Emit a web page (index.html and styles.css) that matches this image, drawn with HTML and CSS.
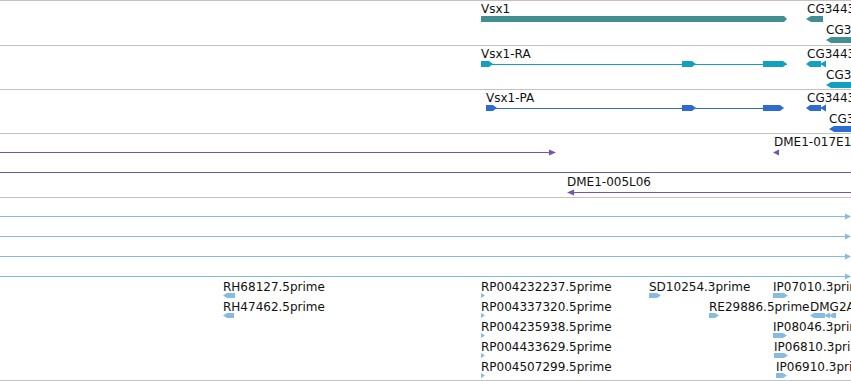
FILE: index.html
```html
<!DOCTYPE html>
<html>
<head>
<meta charset="utf-8">
<title>Tracks</title>
<link rel="stylesheet" href="styles.css">
</head>
<body>
<div class="view">
  <div class="track t-gene">
    <svg class="glyphs" width="851" height="45" viewBox="0 0 851 45">
      <polygon points="481,16 784,16 787,19 784,22 481,22"/>
      <polygon points="806,19 811,16 823,16 823,22 811,22"/>
      <polygon points="826,40 831,37 851,37 851,43 831,43"/>
    </svg>
    <span class="lbl" style="left:481px;top:1px">Vsx1</span>
    <span class="lbl" style="left:807px;top:1px">CG34434</span>
    <span class="lbl" style="left:826px;top:22px">CG34436</span>
  </div>

  <div class="track t-ra">
    <svg class="glyphs" width="851" height="44" viewBox="0 0 851 44">
      <rect x="481" y="19" width="306" height="1"/>
      <polygon points="481,16 489,16 493,19 489,22 481,22"/>
      <polygon points="682,16 692,16 696,19 692,22 682,22"/>
      <polygon points="763,16 783,16 787,19 783,22 763,22"/>
      <polygon points="806,19 810,16 821,16 821,22 810,22"/>
      <polygon points="820,19 826,15.5 826,22.5"/>
      <polygon points="826,40 831,37 851,37 851,43 831,43"/>
    </svg>
    <span class="lbl" style="left:481px;top:1px">Vsx1-RA</span>
    <span class="lbl" style="left:807px;top:1px">CG34434-RA</span>
    <span class="lbl" style="left:826px;top:22px">CG34436-RA</span>
  </div>

  <div class="track t-pa">
    <svg class="glyphs" width="851" height="44" viewBox="0 0 851 44">
      <rect x="486" y="19" width="297" height="1"/>
      <polygon points="486,16 493,16 497,19 493,22 486,22"/>
      <polygon points="682,16 692,16 696,19 692,22 682,22"/>
      <polygon points="763,16 780,16 784,19 780,22 763,22"/>
      <polygon points="806,19 810,16 821,16 821,22 810,22"/>
      <polygon points="820,19 826,15.5 826,22.5"/>
      <polygon points="829,40 834,37 851,37 851,43 834,43"/>
    </svg>
    <span class="lbl" style="left:486px;top:1px">Vsx1-PA</span>
    <span class="lbl" style="left:807px;top:1px">CG34434-PA</span>
    <span class="lbl" style="left:829px;top:22px">CG34436-PA</span>
  </div>

  <div class="track t-clone">
    <svg class="glyphs" width="851" height="64" viewBox="0 0 851 64">
      <rect x="0" y="19" width="551" height="1"/>
      <polygon points="549,16.5 556,19.5 549,22.5"/>
      <polygon points="773,19.5 779,16.5 779,22.5"/>
      <rect x="0" y="39" width="851" height="1"/>
      <rect x="568" y="59" width="283" height="1"/>
      <polygon points="567,59.5 574,56.5 574,62.5"/>
    </svg>
    <span class="lbl" style="left:774px;top:1px">DME1-017E1</span>
    <span class="lbl" style="left:567px;top:41px">DME1-005L06</span>
  </div>

  <div class="track t-est">
    <svg class="glyphs" width="851" height="183" viewBox="0 0 851 183">
      <rect x="0" y="19" width="847" height="1"/>
      <polygon points="845,16.5 851,19.5 845,22.5"/>
      <rect x="0" y="39" width="847" height="1"/>
      <polygon points="845,36.5 851,39.5 845,42.5"/>
      <rect x="0" y="59" width="847" height="1"/>
      <polygon points="845,56.5 851,59.5 845,62.5"/>
      <rect x="0" y="79" width="847" height="1"/>
      <polygon points="845,76.5 851,79.5 845,82.5"/>

      <polygon points="223,98.5 227,96 235,96 235,101 227,101"/>
      <polygon points="223,118.5 227,116 234,116 234,121 227,121"/>

      <polygon points="481,96 485,98.5 481,101"/>
      <polygon points="481,116 485,118.5 481,121"/>
      <polygon points="481,136 485,138.5 481,141"/>
      <polygon points="481,156 485,158.5 481,161"/>
      <polygon points="481,176 485,178.5 481,181"/>

      <polygon points="649,96 657,96 661,98.5 657,101 649,101"/>
      <polygon points="709,116 715,116 719,118.5 715,121 709,121"/>
      <polygon points="773,96 784,96 788,98.5 784,101 773,101"/>
      <polygon points="810,118.5 814,116 825,116 825,121 814,121"/>
      <polygon points="824,118.5 830,115.5 830,121.5"/>
      <polygon points="829,118.5 833,116 836,116 836,121 833,121"/>
      <polygon points="773,136 783,136 787,138.5 783,141 773,141"/>
      <polygon points="774,156 784,156 788,158.5 784,161 774,161"/>
      <polygon points="776,176 783,176 787,178.5 783,181 776,181"/>
    </svg>
    <span class="lbl" style="left:223px;top:82px">RH68127.5prime</span>
    <span class="lbl" style="left:223px;top:102px">RH47462.5prime</span>
    <span class="lbl" style="left:481px;top:82px">RP004232237.5prime</span>
    <span class="lbl" style="left:481px;top:102px">RP004337320.5prime</span>
    <span class="lbl" style="left:481px;top:122px">RP004235938.5prime</span>
    <span class="lbl" style="left:481px;top:142px">RP004433629.5prime</span>
    <span class="lbl" style="left:481px;top:162px">RP004507299.5prime</span>
    <span class="lbl" style="left:649px;top:82px">SD10254.3prime</span>
    <span class="lbl" style="left:709px;top:102px">RE29886.5prime</span>
    <span class="lbl" style="left:773px;top:82px">IP07010.3prime</span>
    <span class="lbl" style="left:810px;top:102px">DMG2A01.5prime</span>
    <span class="lbl" style="left:773px;top:122px">IP08046.3prime</span>
    <span class="lbl" style="left:774px;top:142px">IP06810.3prime</span>
    <span class="lbl" style="left:776px;top:162px">IP06910.3prime</span>
  </div>

  <div class="track t-end"></div>
</div>
</body>
</html>
```

FILE: styles.css
```css
html, body {
  margin: 0;
  padding: 0;
  background: #ffffff;
  overflow: hidden;
}

.view {
  width: 851px;
  height: 381px;
  display: flex;
  flex-direction: column;
  overflow: hidden;
}

.track {
  position: relative;
  flex: none;
  box-sizing: border-box;
  border-top: 1px solid #c2c2c2;
  overflow: visible;
}

.t-gene { height: 45px; }
.t-ra { height: 44px; }
.t-pa { height: 44px; }
.t-clone { height: 64px; }
.t-est { height: 183px; }
.t-end { height: 1px; }

.glyphs {
  position: absolute;
  left: 0;
  top: -1px;
  display: block;
}

.t-gene .glyphs { fill: #418f92; }
.t-ra .glyphs { fill: #13a0c0; }
.t-pa .glyphs { fill: #2f6ccf; }
.t-clone .glyphs { fill: #7453b2; }
.t-est .glyphs { fill: #86bce2; }

.lbl {
  position: absolute;
  font-family: "DejaVu Sans", sans-serif;
  font-size: 12px;
  line-height: 14px;
  color: #111111;
  white-space: nowrap;
}
```
